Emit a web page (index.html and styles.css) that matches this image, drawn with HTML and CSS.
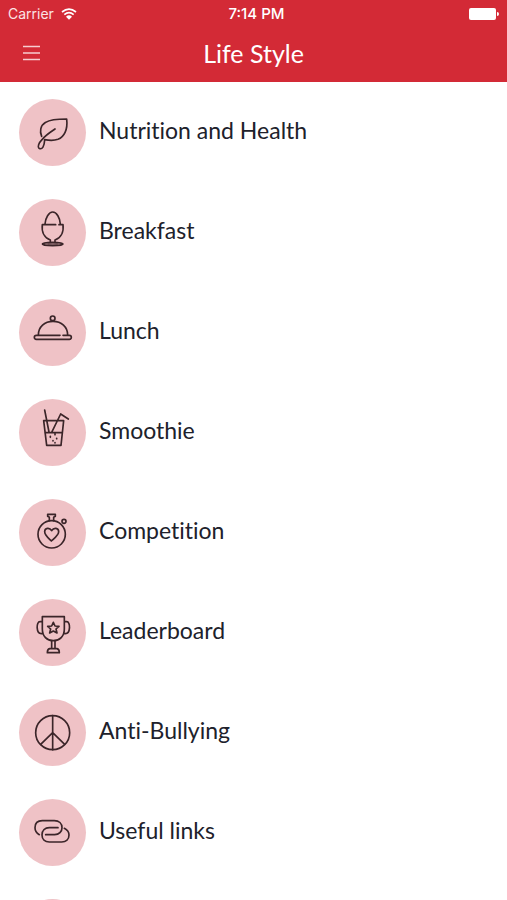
FILE: index.html
```html
<!DOCTYPE html>
<html lang="en">
<head>
<meta charset="utf-8">
<meta name="viewport" content="width=device-width, initial-scale=1">
<title>Life Style</title>
<link rel="stylesheet" href="styles.css">
</head>
<body>
<div class="app">
  <header class="header">
    <div class="status">
      <div class="carrier">
        <span>Carrier</span>
        <svg class="wifi" viewBox="0 0 48 36" aria-hidden="true">
          <path d="M3 12Q24-5 45 12M10 20Q24 8 38 20" fill="none" stroke="currentColor" stroke-width="5"/>
          <path d="M15 26Q24 18 33 26L24 35Z" fill="currentColor"/>
        </svg>
      </div>
      <span class="time">7:14 PM</span>
      <svg class="battery" viewBox="0 0 30 12" aria-hidden="true">
        <rect width="27" height="12" rx="2" fill="currentColor"/>
        <path d="M28 4Q30 4 30 6T28 8Z" fill="currentColor"/>
      </svg>
    </div>
    <div class="navbar">
      <button class="menu" type="button" aria-label="Menu">
        <svg class="menu-icon" viewBox="0 0 17 16" aria-hidden="true"><path d="M0 1.5H17M0 8H17M0 14.5H17" stroke="currentColor" stroke-width="1.4"/></svg>
      </button>
      <h1 class="title">Life Style</h1>
    </div>
  </header>
  <main class="content">
    <ul class="list">
      <li><a class="row" href="#nutrition">
        <svg class="icon" viewBox="28 26 201 201" aria-hidden="true"><path d="M96 138C90 124 91 106 108 96C124 86 148 86 171 86C175 119 163 140 145 147C134 151 119 151 105 148M136 116C121 126 105 137 97 148C87 158 83 170 88 174C98 179 104 168 105 148"/></svg>
        <span>Nutrition and Health</span></a></li>
      <li><a class="row" href="#breakfast">
        <svg class="icon" viewBox="28 26 201 201" aria-hidden="true"><path d="M106 101C107 83 118 65 129 65C141 65 151 83 152 101M138 103H98C95 126 105 143 122 149V155M148 103H160C163 126 153 143 136 149V155"/><ellipse cx="129" cy="161" rx="31" ry="5"/><path d="M115 161H143" stroke-width="3"/></svg>
        <span>Breakfast</span></a></li>
      <li><a class="row" href="#lunch">
        <svg class="icon" viewBox="28 26 201 201" aria-hidden="true"><circle cx="129" cy="84" r="7"/><path d="M86 134C86 109 105 93 130 93C155 93 174 109 174 134M151 135H80Q74 135 74 141T80 147H179Q185 147 185 141T179 135H160"/></svg>
        <span>Lunch</span></a></li>
      <li><a class="row" href="#smoothie">
        <svg class="icon" viewBox="28 26 201 201" aria-hidden="true"><path d="M102 91H162L154 165H111ZM106 127H158M105 59L118 125M176 86L153 71L126 126"/><path d="M122 138V141M136 130V133M141 144V145M130 151V152M136 157V158"/></svg>
        <span>Smoothie</span></a></li>
      <li><a class="row" href="#competition">
        <svg class="icon" viewBox="28 26 201 201" aria-hidden="true"><circle cx="126" cy="132" r="41"/><path d="M119 91V81L114 78V72H137V78L132 81V91M125 152C115 142 105 134 105 124C105 112 120 111 126 121C132 111 147 112 147 124C147 134 136 142 125 152Z"/><circle cx="163" cy="93" r="6"/></svg>
        <span>Competition</span></a></li>
      <li><a class="row" href="#leaderboard">
        <svg class="icon" viewBox="28 26 201 201" aria-hidden="true"><path d="M98 79H164V116C164 138 150 151 131 151C112 151 98 138 98 116ZM98 94H91C79 94 79 130 95 130H100M164 94H171C183 94 183 130 167 130H162M126 151V175M136 151V175M120 175H142Q149 177 149 187H113Q113 177 120 175ZM131 96L136 107L148 108L139 116L142 128L131 122L120 128L123 116L114 108L126 107Z"/></svg>
        <span>Leaderboard</span></a></li>
      <li><a class="row" href="#anti-bullying">
        <svg class="icon" viewBox="28 26 201 201" aria-hidden="true"><circle cx="129" cy="127" r="51"/><path d="M129 76V178M129 127L93 162M129 127L165 162"/></svg>
        <span>Anti-Bullying</span></a></li>
      <li><a class="row" href="#links">
        <svg class="icon" viewBox="28 26 201 201" aria-hidden="true"><path d="M89 133C80 128 76 121 76 112C76 98 85 91 98 91H134C148 91 157 99 157 112C157 124 148 133 135 133H108M145 112H119C106 112 97 121 97 134C97 147 106 155 119 155H156C169 155 178 147 178 134C178 125 172 118 164 114"/></svg>
        <span>Useful links</span></a></li>
      <li class="row"><span class="icon"></span></li>
    </ul>
  </main>
</div>
</body>
</html>
```

FILE: styles.css
```css
* { box-sizing: border-box; }

body {
  margin: 0;
  background: #fff;
  color: #20212b;
  font-family: Lato, "Open Sans", sans-serif;
  font-variant-ligatures: none;
}

.app {
  display: flex;
  flex-direction: column;
  height: 100vh;
}

.header {
  flex: none;
  padding-bottom: 4px;
  background: #d32a36;
  color: #fff;
}

.status {
  display: grid;
  grid-template-columns: 1fr auto 1fr;
  align-items: center;
  height: 28px;
  padding: 0 8px;
  font: 14px/20px Inter, sans-serif;
}

.carrier {
  display: flex;
  align-items: center;
  gap: 7px;
  color: #fbe3e5;
}

.wifi {
  width: 16px;
  height: 12px;
  color: #fff;
}

.time {
  padding-left: 6px;
  font-size: 15px;
  font-weight: 500;
}

.battery {
  justify-self: end;
  width: 30px;
  height: 12px;
}

.navbar {
  display: grid;
  grid-template-columns: 48px 1fr 48px;
  align-items: center;
  height: 50px;
  padding: 0 7px;
}

.menu {
  display: flex;
  justify-content: center;
  padding: 8px 0;
  border: 0;
  background: none;
  color: #f7ccd0;
}

.menu-icon { width: 17px; height: 16px; }

.title {
  margin: 0;
  font-size: 25px;
  line-height: 32px;
  font-weight: 400;
  text-align: center;
}

.content {
  flex: 1;
  min-height: 0;
  overflow-y: auto;
  scrollbar-width: none;
}

.list {
  margin: 0;
  padding: 0;
  list-style: none;
}

.row {
  display: flex;
  align-items: center;
  gap: 13px;
  height: 100px;
  padding: 0 19px;
  color: inherit;
  font-size: 23px;
  line-height: 32px;
  font-weight: 400;
  text-decoration: none;
}

.row span { padding-bottom: 4px; }

.icon {
  flex: none;
  width: 67px;
  height: 67px;
  border-radius: 50%;
  background: #efc2c6;
  fill: none;
  stroke: #3b2529;
  stroke-width: 5;
  stroke-linecap: round;
  stroke-linejoin: round;
}
```
